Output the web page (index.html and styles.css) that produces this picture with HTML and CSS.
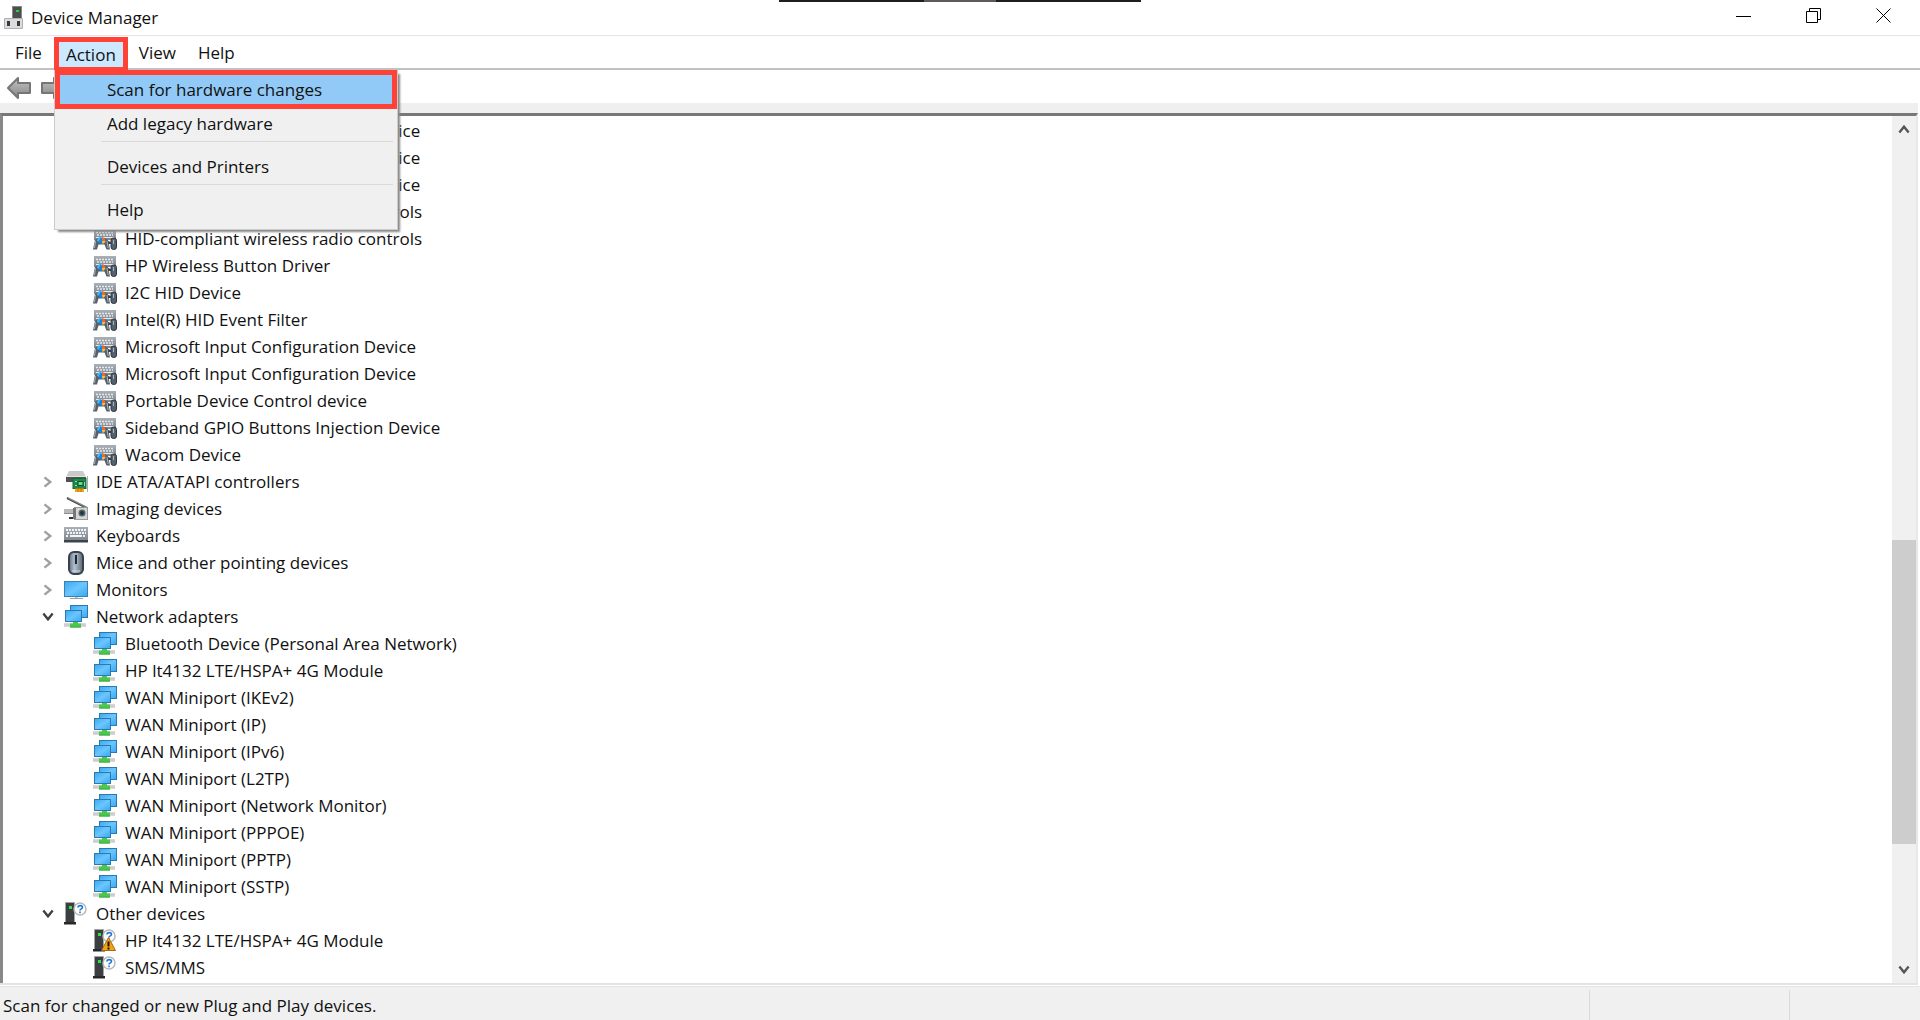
FILE: index.html
```html
<!DOCTYPE html>
<html lang="en">
<head>
    <meta charset="UTF-8">
    <meta name="viewport" content="width=device-width, initial-scale=1.0">
    <title>Device Manager</title>
    <link rel="stylesheet" href="styles.css">
</head>
<body>
    <!-- icon set -->
    <svg class="sprite" aria-hidden="true">
        <defs>
            <linearGradient id="blue" x1="0" y1="0" x2="1" y2="1">
                <stop offset="0" stop-color="#37a9f4"/>
                <stop offset=".5" stop-color="#6cc6fd"/>
                <stop offset="1" stop-color="#35a8f5"/>
            </linearGradient>
            <linearGradient id="grey" x1="0" y1="0" x2="0" y2="1">
                <stop offset="0" stop-color="#a9b0b7"/>
                <stop offset="1" stop-color="#7d858d"/>
            </linearGradient>
            <linearGradient id="mouse-body" x1="0" y1="0" x2="1" y2="0">
                <stop offset="0" stop-color="#66717f"/>
                <stop offset=".4" stop-color="#b3c0d0"/>
                <stop offset="1" stop-color="#5a6573"/>
            </linearGradient>
            <linearGradient id="arrow-body" x1="0" y1="0" x2="0" y2="1">
                <stop offset="0" stop-color="#c4c4c4"/>
                <stop offset="1" stop-color="#858585"/>
            </linearGradient>
        </defs>
        <symbol id="hid" viewBox="0 0 24 24">
            <rect x="1" y="2" width="22" height="11" fill="url(#grey)"/>
            <path d="M3 5.500h18M4 8h16" stroke="#e6eaee" stroke-width="1.500" stroke-dasharray="2 1"/>
            <path d="M3 10.500h18" stroke="#e6eaee"/>
            <path d="M2 13l3-2h7l3 2 2 9.500h-3.500l-2-5H5.500L4 22.500H0z" fill="#56616c"/>
            <path d="M2.500 14l-1 7M14 14l1.200 7" stroke="#aab5bf"/>
            <path d="M8 10a4 4 0 0 0-4 4l4 2z" fill="#45b4f2"/>
            <path d="M8 10l-2.500 5 3 2 1.500-4z" fill="#1b83dd"/>
            <path d="M9 10a4 4 0 0 1 3.500 4H9z" fill="#ed6a35"/>
            <path d="M9 14h3.500a4 4 0 0 1-3 3z" fill="#e9c848"/>
            <path d="M15 14l3 1v2h-3" fill="#3c454e"/>
            <rect x="18" y="11" width="5.500" height="11.500" rx="2.500" fill="#55606d" stroke="#2f3640"/>
            <path d="M20.500 13v4" stroke="#a9b8c8"/>
        </symbol>
        <symbol id="ide" viewBox="0 0 24 24">
            <path d="M5 1h14l3 6H2z" fill="#c9c9c9"/>
            <path d="M2 6h20v6H2z" fill="#515151"/>
            <path d="M2 6.500h20" stroke="#e6e6e6"/>
            <rect x="9" y="8.500" width="13" height="10" fill="#1c8a48" stroke="#11693a"/>
            <rect x="14" y="11.500" width="5" height="4" fill="#6ed69a" stroke="#0b4e29"/>
            <path d="M11 11.500h2M11 15.500h2M20.500 12v4" stroke="#8fe0ae"/>
            <path d="M11 18.500h9v3.500h-9z" fill="#f5a313"/>
            <path d="M14 19v3M17 19v3" stroke="#cf6d05"/>
            <path d="M23.500 6v16" stroke="#a9a9a9"/>
        </symbol>
        <symbol id="imaging" viewBox="0 0 24 24">
            <path d="M3 1l20 10" stroke="#454545" stroke-width="2"/>
            <path d="M4 1l18 9" stroke="#999"/>
            <rect x="0" y="12" width="10" height="5" fill="#b9b9b9"/>
            <path d="M0 16.500h10" stroke="#8e8e8e"/>
            <path d="M5 21h6" stroke="#333" stroke-width="2"/>
            <rect x="10.500" y="10.500" width="13" height="12" fill="#d5d5d5" stroke="#9a9a9a"/>
            <rect x="9" y="11" width="3" height="11" fill="#777"/>
            <circle cx="18" cy="16" r="3.500" fill="#58646a"/>
            <circle cx="18" cy="16" r="2" fill="#173b43"/>
        </symbol>
        <symbol id="keyboard" viewBox="0 0 24 24">
            <rect x="0" y="3" width="24" height="14" fill="url(#grey)"/>
            <path d="M2 6h20M3 9h19M2 12h3M19 12h3" stroke="#f2f4f6" stroke-width="2" stroke-dasharray="2 1"/>
            <path d="M6 12h12" stroke="#f2f4f6" stroke-width="2"/>
            <path d="M0 16h24v2.500H0z" fill="#3b434c"/>
        </symbol>
        <symbol id="mouse" viewBox="0 0 24 24">
            <rect x="5" y="1" width="14" height="22" rx="5" fill="url(#mouse-body)" stroke="#39414c" stroke-width="2"/>
            <rect x="10" y="2" width="4" height="12" rx="1" fill="#9fb0c2"/>
            <path d="M12 4v9" stroke="#20262e" stroke-width="2"/>
            <path d="M8 20h8" stroke="#d4dce4"/>
        </symbol>
        <symbol id="monitor" viewBox="0 0 24 24">
            <rect x=".5" y="3.500" width="23" height="15" fill="url(#blue)" stroke="#3f7fae"/>
            <path d="M11 19h3v1h-3z" fill="#b9c7d1"/>
            <path d="M6 20.500h13" stroke="#8fa3b1"/>
        </symbol>
        <symbol id="network" viewBox="0 0 24 24">
            <rect x="6.500" y=".5" width="17" height="12" fill="url(#blue)" stroke="#2c79ad"/>
            <rect x="1.500" y="5.500" width="16" height="11" fill="url(#blue)" stroke="#2c79ad"/>
            <path d="M0 18h22v4H0z" fill="#d9d9d9"/>
            <path d="M0 20h22" stroke="#c2c2c2"/>
            <path d="M9 17h5v1.500h3v4H6v-4h3z" fill="#4cc64f"/>
            <path d="M6 22h11" stroke="#3fae45"/>
        </symbol>
        <symbol id="unknown" viewBox="0 0 24 24">
            <path d="M1.500.5h9v20h-9z" fill="#3c3f42" stroke="#a5a5a5"/>
            <path d="M0 20h12v2.500H0z" fill="#26282a"/>
            <rect x="5" y="4" width="3" height="3" fill="#2fe23d"/>
            <circle cx="16" cy="7" r="6" fill="#fff" stroke="#b5b9bd" stroke-width="1.500"/>
            <path d="M14 5.500c0-2.500 4.500-2.500 4.500 0 0 1.500-2.500 1.300-2.500 3M16 9.500v1.700" fill="none" stroke="#2277cf" stroke-width="1.600"/>
        </symbol>
        <symbol id="warning" viewBox="0 0 24 24">
            <use href="#unknown"/>
            <path d="M15.500 8.500l7 13h-14z" fill="#f2a31c" stroke="#a9690a" stroke-linejoin="round"/>
            <path d="M15.500 12.500v5M15.500 18.500v2" stroke="#1d1400" stroke-width="2"/>
        </symbol>
        <symbol id="computer" viewBox="0 0 24 24">
            <rect x="10.500" y=".5" width="9" height="13" fill="#4b4d4f" stroke="#888"/>
            <rect x="14" y="4" width="3" height="2" fill="#23d33b"/>
            <path d="M2.500 12.500h18v10h-18z" fill="#dcdcdf" stroke="#b0b0b3"/>
            <path d="M5 15h3v5H5zM15 15h3v5h-3z" fill="#37393b"/>
        </symbol>
        <symbol id="arrow" viewBox="0 0 24 24">
            <path d="M1 12L11 2v5h12v10H11v5z" fill="url(#arrow-body)" stroke="#767676" stroke-width="2" stroke-linejoin="round"/>
        </symbol>
        <symbol id="chevron" viewBox="0 0 12 12">
            <path d="M3 2l5 4-5 4" fill="none" stroke="currentColor" stroke-width="2"/>
        </symbol>
    </svg>

    <div class="capture-bar"></div>

    <header class="titlebar">
        <svg class="icon"><use href="#computer"/></svg>
        <h1>Device Manager</h1>
        <div class="window-buttons">
            <button aria-label="Minimize"><svg viewBox="0 0 16 16"><path d="M0 8.500h15"/></svg></button>
            <button aria-label="Restore"><svg viewBox="0 0 16 16"><path d="M.5 3.500h11v11H.5zM3.500 3V.5h11v11H12"/></svg></button>
            <button aria-label="Close"><svg viewBox="0 0 16 16"><path d="M.5.5l14 14M14.500.5l-14 14"/></svg></button>
        </div>
    </header>

    <nav class="menubar">
        <button>File</button>
        <div class="menu-holder">
            <button class="open" aria-expanded="true">Action</button>
            <div class="menu">
                <button class="selected">Scan for hardware changes</button>
                <button>Add legacy hardware</button>
                <hr>
                <button>Devices and Printers</button>
                <hr>
                <button>Help</button>
            </div>
        </div>
        <button>View</button>
        <button>Help</button>
    </nav>

    <div class="toolbar">
        <button aria-label="Back"><svg class="icon"><use href="#arrow"/></svg></button>
        <button class="forward" aria-label="Forward"><svg class="icon"><use href="#arrow"/></svg></button>
    </div>

    <main class="tree-frame">
        <div class="tree">
            <ul class="devices">
                <li><svg class="icon"><use href="#hid"/></svg>HID-compliant vendor-defined device</li>
                <li><svg class="icon"><use href="#hid"/></svg>HID-compliant vendor-defined device</li>
                <li><svg class="icon"><use href="#hid"/></svg>HID-compliant vendor-defined device</li>
                <li><svg class="icon"><use href="#hid"/></svg>HID-compliant wireless radio controls</li>
                <li><svg class="icon"><use href="#hid"/></svg>HID-compliant wireless radio controls</li>
                <li><svg class="icon"><use href="#hid"/></svg>HP Wireless Button Driver</li>
                <li><svg class="icon"><use href="#hid"/></svg>I2C HID Device</li>
                <li><svg class="icon"><use href="#hid"/></svg>Intel(R) HID Event Filter</li>
                <li><svg class="icon"><use href="#hid"/></svg>Microsoft Input Configuration Device</li>
                <li><svg class="icon"><use href="#hid"/></svg>Microsoft Input Configuration Device</li>
                <li><svg class="icon"><use href="#hid"/></svg>Portable Device Control device</li>
                <li><svg class="icon"><use href="#hid"/></svg>Sideband GPIO Buttons Injection Device</li>
                <li><svg class="icon"><use href="#hid"/></svg>Wacom Device</li>
            </ul>
            <div class="category">
                <button class="toggle" aria-label="Expand"><svg><use href="#chevron"/></svg></button>
                <svg class="icon"><use href="#ide"/></svg>IDE ATA/ATAPI controllers
            </div>
            <div class="category">
                <button class="toggle" aria-label="Expand"><svg><use href="#chevron"/></svg></button>
                <svg class="icon"><use href="#imaging"/></svg>Imaging devices
            </div>
            <div class="category">
                <button class="toggle" aria-label="Expand"><svg><use href="#chevron"/></svg></button>
                <svg class="icon"><use href="#keyboard"/></svg>Keyboards
            </div>
            <div class="category">
                <button class="toggle" aria-label="Expand"><svg><use href="#chevron"/></svg></button>
                <svg class="icon"><use href="#mouse"/></svg>Mice and other pointing devices
            </div>
            <div class="category">
                <button class="toggle" aria-label="Expand"><svg><use href="#chevron"/></svg></button>
                <svg class="icon"><use href="#monitor"/></svg>Monitors
            </div>
            <div class="category">
                <button class="toggle expanded" aria-label="Collapse"><svg><use href="#chevron"/></svg></button>
                <svg class="icon"><use href="#network"/></svg>Network adapters
            </div>
            <ul class="devices">
                <li><svg class="icon"><use href="#network"/></svg>Bluetooth Device (Personal Area Network)</li>
                <li><svg class="icon"><use href="#network"/></svg>HP lt4132 LTE/HSPA+ 4G Module</li>
                <li><svg class="icon"><use href="#network"/></svg>WAN Miniport (IKEv2)</li>
                <li><svg class="icon"><use href="#network"/></svg>WAN Miniport (IP)</li>
                <li><svg class="icon"><use href="#network"/></svg>WAN Miniport (IPv6)</li>
                <li><svg class="icon"><use href="#network"/></svg>WAN Miniport (L2TP)</li>
                <li><svg class="icon"><use href="#network"/></svg>WAN Miniport (Network Monitor)</li>
                <li><svg class="icon"><use href="#network"/></svg>WAN Miniport (PPPOE)</li>
                <li><svg class="icon"><use href="#network"/></svg>WAN Miniport (PPTP)</li>
                <li><svg class="icon"><use href="#network"/></svg>WAN Miniport (SSTP)</li>
            </ul>
            <div class="category">
                <button class="toggle expanded" aria-label="Collapse"><svg><use href="#chevron"/></svg></button>
                <svg class="icon"><use href="#unknown"/></svg>Other devices
            </div>
            <ul class="devices">
                <li><svg class="icon"><use href="#warning"/></svg>HP lt4132 LTE/HSPA+ 4G Module</li>
                <li><svg class="icon"><use href="#unknown"/></svg>SMS/MMS</li>
            </ul>
        </div>
        <div class="scrollbar">
            <button class="up" aria-label="Scroll up"><svg><use href="#chevron"/></svg></button>
            <div class="track"><div class="thumb"></div></div>
            <button class="down" aria-label="Scroll down"><svg><use href="#chevron"/></svg></button>
        </div>
    </main>

    <footer class="statusbar">
        <p>Scan for changed or new Plug and Play devices.</p>
        <div class="pane wide"></div>
        <div class="pane"></div>
    </footer>
</body>
</html>
```
FILE: styles.css
```css
*{
    margin: 0;
    padding: 0;
    box-sizing: border-box;
}

body{
    display: flex;
    flex-direction: column;
    height: 100vh;
    overflow: hidden;
    font-family: "Open Sans", "Noto Sans", sans-serif;
    font-size: 17px;
    line-height: 27px;
    color: #111;
    background-color: #fff;
}

button{
    font: inherit;
    color: inherit;
    background: none;
    border: none;
}

.sprite{
    position: absolute;
    width: 0;
    height: 0;
}

.icon{
    width: 24px;
    height: 24px;
    flex-shrink: 0;
}

/* dark strip on the top edge of the screen */
.capture-bar{
    position: absolute;
    top: 0;
    left: 50%;
    width: 362px;
    height: 2px;
    margin-left: -181px;
    background: linear-gradient(to right, #1f1d1d 40%, #5f5a57 40%, #5f5a57 60%, #1f1d1d 60%);
}

.titlebar{
    display: flex;
    align-items: center;
    height: 36px;
    padding-left: 2px;
    border-bottom: 1px solid #e5e5e5;
}

.titlebar h1{
    flex-grow: 1;
    margin-left: 5px;
    font-size: 17px;
    font-weight: normal;
}

.window-buttons{
    display: flex;
    padding-right: 1px;
}

.window-buttons button{
    width: 70px;
    height: 34px;
}

.window-buttons svg{
    width: 16px;
    height: 16px;
    fill: none;
    stroke: #000;
}

.menubar{
    display: flex;
    height: 34px;
    padding-left: 4px;
    border-bottom: 2px solid #bfc1c4;
}

.menubar > button{
    padding: 0 11px;
}

.menu-holder{
    position: relative;
    margin-left: 1px;
}

.menu-holder .open{
    height: 35px;
    margin-top: 1px;
    padding: 0 7px;
    line-height: 25px;
    background-color: #cce8ff;
    border: 5px solid #ff4136;
}

.menu{
    position: absolute;
    z-index: 2;
    top: 34px;
    left: 0;
    width: 344px;
    height: 160px;
    display: flex;
    flex-direction: column;
    background-color: #f0f0f0;
    border: 1px solid #ccc;
    border-top: none;
    box-shadow: 3px 3px 2px -1px #888;
}

.menu button{
    height: 28px;
    padding-left: 52px;
    text-align: left;
}

.menu .selected{
    height: 39px;
    padding-left: 47px;
    background-color: #91c9f7;
    border: 5px solid #ff4136;
}

.menu hr{
    margin: 4px 4px 10px 46px;
    border: none;
    border-top: 1px solid #d9d9d9;
}

.toolbar{
    display: flex;
    align-items: center;
    gap: 10px;
    height: 33px;
    padding: 2px 0 0 7px;
}

.toolbar button, .toolbar .icon{
    display: block;
    width: 24px;
    height: 24px;
}

.toolbar .forward{
    transform: scaleX(-1);
}

.tree-frame{
    display: flex;
    flex-grow: 1;
    min-height: 0;
    margin-right: 2px;
    border-top: 10px solid #efefef;
    border-bottom: 2px solid #e3e3e3;
}

.tree{
    flex-grow: 1;
    overflow: hidden;
    padding-top: 1px;
    border-top: 3px solid #777;
    border-left: 3px solid #888;
}

.tree ul{
    list-style: none;
}

.devices li, .category{
    display: flex;
    align-items: center;
    gap: 8px;
    height: 27px;
    white-space: nowrap;
}

.devices li{
    padding-left: 90px;
}

.category{
    padding-left: 38px;
}

.toggle{
    width: 15px;
    height: 14px;
    color: #a0a0a0;
}

.toggle svg, .scrollbar svg{
    display: block;
    width: 14px;
    height: 14px;
}

.expanded{
    color: #404040;
}

.expanded svg, .down svg{
    transform: rotate(90deg);
}

.up svg{
    transform: rotate(-90deg);
}

.scrollbar{
    display: flex;
    flex-direction: column;
    width: 26px;
    background-color: #f0f0f0;
    border-top: 3px solid #777;
    border-right: 2px solid #e8e8e8;
}

.scrollbar button{
    height: 26px;
    padding-left: 5px;
    color: #555;
}

.track{
    display: flex;
    flex-direction: column;
    flex-grow: 1;
}

.track::before{
    content: "";
    flex: 398;
}

.thumb{
    flex: 304;
    background-color: #cdcdcd;
}

.track::after{
    content: "";
    flex: 113;
}

.statusbar{
    display: flex;
    height: 34px;
    margin-top: 1px;
    padding: 3px 3px 0;
    background-color: #f0f0f0;
    border-top: 1px solid #e3e3e3;
}

.statusbar p{
    flex-grow: 1;
    line-height: 32px;
}

.pane{
    width: 128px;
    border-left: 1px solid #d9d9d9;
}

.pane.wide{
    width: 200px;
}
```
